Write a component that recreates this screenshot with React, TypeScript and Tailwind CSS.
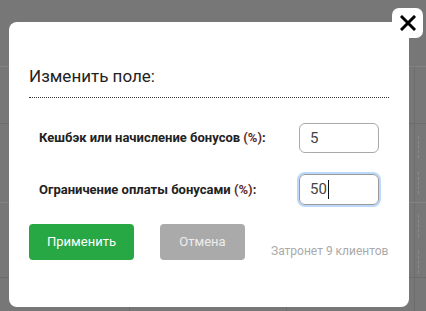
import React from 'react';

const font = { fontFamily: 'Roboto, "Liberation Sans", sans-serif' };

function Backdrop() {
  return (
    <div className="flex h-full w-full flex-col bg-[#777]">
      <div className="h-[67px] shrink-0 border-b border-[#828282]" />
      <div className="flex h-[57px] shrink-0 border-b border-[#6c6c6c]">
        <div className="flex-1" />
        <div className="w-[12px] border-l border-[#6c6c6c]" />
      </div>
      <div className="flex h-[79px] shrink-0 border-b border-[#828282]">
        <div className="flex-1" />
        <div className="flex w-[12px] flex-col gap-[14px] border-l border-[#6c6c6c] pl-[3px] pt-[12px]">
          <div className="h-[22px] w-[6px] border-l border-dashed border-[#8a8a8a]" />
          <div className="h-[22px] w-[6px] border-l border-dashed border-[#8a8a8a]" />
        </div>
      </div>
      <div className="flex h-[75px] shrink-0 border-b border-[#6c6c6c]">
        <div className="flex-1" />
        <div className="flex w-[12px] flex-col gap-[14px] border-l border-[#6c6c6c] pl-[3px] pt-[12px]">
          <div className="h-[22px] w-[6px] border-l border-dashed border-[#8a8a8a]" />
          <div className="h-[22px] w-[6px] border-l border-dashed border-[#8a8a8a]" />
        </div>
      </div>
      <div className="flex flex-1">
        <div className="w-[130px] border-r border-[#6c6c6c]" />
        <div className="flex-1" />
        <div className="flex w-[128px] items-start border-l border-[#6c6c6c] pl-[8px] pt-[10px] text-[14px] leading-none text-[#333]">
          <span>Завершенный</span>
          <svg className="ml-[10px] mt-[2px] h-[10px] w-[10px]" viewBox="0 0 10 10" fill="none" stroke="#333" strokeWidth={1.5}>
            <path d="M1 3l4 4 4-4" />
          </svg>
        </div>
        <div className="w-[12px] border-l border-[#6c6c6c]" />
      </div>
    </div>
  );
}

function Field({ label, value, focused }: { label: string; value: string; focused?: boolean }) {
  return (
    <div className="flex items-center justify-between pl-[10px] pr-[10px]">
      <span className="text-[13px] font-bold text-[#222]">
        {label} <span className="text-[#5e2c2c]">(%)</span>:
      </span>
      <div
        className={
          focused
            ? 'flex h-[31px] w-[80px] items-center rounded-[6px] border border-[#9a9a9a] pl-[10px] text-[15px] text-[#444] shadow-[0_0_0_2px_#bcd8fb]'
            : 'flex h-[30px] w-[80px] items-center rounded-[6px] border border-[#aaa] pl-[10px] text-[15px] text-[#444]'
        }
      >
        {value}
        {focused && <span className="ml-[1px] h-[19px] w-px bg-[#111]" />}
      </div>
    </div>
  );
}

export default function App() {
  return (
    <div className="relative h-[311px] w-[426px] overflow-hidden" style={font}>
      <Backdrop />

      <div className="absolute left-[9px] top-[22px] h-[285px] w-[400px] rounded-[8px] bg-white px-[20px] pt-[44px]">
        <h2 className="text-[17px] leading-[20px] text-[#222]">Изменить поле:</h2>
        <div className="mt-[11px] border-b border-dotted border-[#333]" />

        <div className="mt-[25px] flex flex-col gap-[21px]">
          <Field label="Кешбэк или начисление бонусов" value="5" />
          <Field label="Ограничение оплаты бонусами" value="50" focused />
        </div>

        <div className="mt-[19px] flex items-start whitespace-nowrap">
          <button className="h-[36px] w-[105px] shrink-0 rounded-[4px] bg-[#28a745] text-[13px] text-white">Применить</button>
          <button className="ml-[26px] h-[36px] w-[85px] shrink-0 rounded-[4px] bg-[#aaa] text-[13px] text-[#eee]">Отмена</button>
          <span className="ml-[26px] mt-[17px] shrink-0 text-[12px] leading-[20px] text-[#aaa]">Затронет 9 клиентов</span>
        </div>
      </div>

      <button className="absolute left-[392px] top-[8px] flex h-[30px] w-[31px] items-center justify-center rounded-[7px] bg-white">
        <svg className="h-[16px] w-[16px]" viewBox="0 0 16 16" fill="none" stroke="#000" strokeWidth={3} strokeLinecap="square">
          <path d="M2 2l12 12M14 2L2 14" />
        </svg>
      </button>
    </div>
  );
}
